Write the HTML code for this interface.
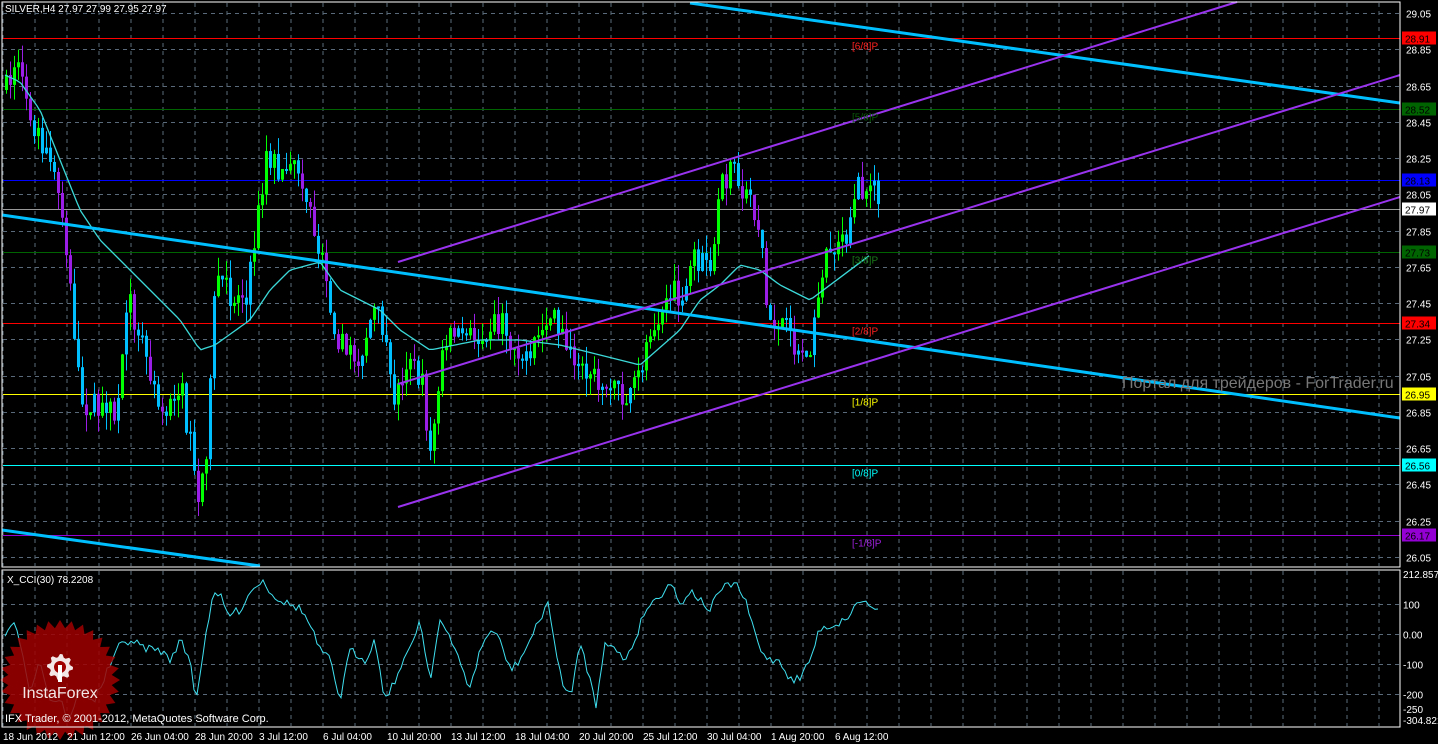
<!DOCTYPE html>
<html><head><meta charset="utf-8"><style>
html,body{margin:0;padding:0;background:#000;width:1438px;height:744px;overflow:hidden}
svg{display:block}
text{font-family:"Liberation Sans",sans-serif;font-size:10px}
</style></head><body>
<svg id="s" width="1438" height="744" xmlns="http://www.w3.org/2000/svg">
<rect width="1438" height="744" fill="#000"/>
<g id="grid"></g>
<g id="hl"></g>
<g id="candles"></g>
<polyline id="ma" fill="none" stroke="#3cd8d8" stroke-width="1.3"/>
<g stroke="#00bfff" stroke-width="3">
<line x1="690" y1="3" x2="1400" y2="103"/>
<line x1="2" y1="215" x2="1400" y2="418"/>
<line x1="2" y1="530" x2="260" y2="566"/>
</g>
<g stroke="#9933ee" stroke-width="2">
<line x1="398" y1="262" x2="1237" y2="2"/>
<line x1="398" y1="384" x2="1400" y2="75"/>
<line x1="398" y1="507" x2="1400" y2="197"/>
</g>
<text x="1122" y="388" fill="#777" style="font-size:16px">Портал для трейдеров - ForTrader.ru</text>
<g id="mlab" style="font-size:11px"></g>
<polyline id="cci" fill="none" stroke="#3fe0f0" stroke-width="1"/>
<g id="logo" transform="translate(60,680)">
<polygon id="star" fill="#a00000" fill-opacity="0.85"/>
<polygon id="gear" fill="#fff" fill-opacity="0.9"/>
<circle cx="0" cy="-13" r="6" fill="#a00000"/>
<rect x="-2" y="-15" width="4" height="17" fill="#fff"/>
<text x="0" y="18" text-anchor="middle" fill="#fff" fill-opacity="0.9" style="font-size:16px">InstaForex</text>
</g>
<rect x="2" y="2" width="1398" height="565" fill="none" stroke="#fff" stroke-width="1"/>
<rect x="2" y="570" width="1398" height="157" fill="none" stroke="#fff" stroke-width="1"/>
<text x="5" y="12" fill="#fff">SILVER,H4  27.97 27.99 27.95 27.97</text>
<text x="7" y="583" fill="#fff">X_CCI(30) 78.2208</text>
<text x="5" y="722" fill="#fff" style="font-size:11px">IFX Trader, © 2001-2012, MetaQuotes Software Corp.</text>
<g id="axis"></g>
</svg>
<script>
(function(){
var NS='http://www.w3.org/2000/svg';
function el(p,t,a,txt){var e=document.createElementNS(NS,t);for(var k in a)e.setAttribute(k,a[k]);if(txt!=null)e.textContent=txt;document.getElementById(p).appendChild(e);return e;}
function py(p){return 13+(29.05-p)*181.33;}
for(var x=3;x<1400;x+=32){el('grid','line',{x1:x,y1:3,x2:x,y2:566,stroke:'#5a6a7a','stroke-dasharray':'4,4'});el('grid','line',{x1:x,y1:571,x2:x,y2:726,stroke:'#5a6a7a','stroke-dasharray':'4,4'});}
for(var p=29.05;p>26;p-=0.2){var y=Math.round(py(p))+.5;el('grid','line',{x1:3,y1:y,x2:1400,y2:y,stroke:'#5a6a7a','stroke-dasharray':'4,4'});el('axis','text',{x:1406,y:y+4,fill:'#fff'},p.toFixed(2));}
[100,0,-100,-200].forEach(function(v){var y=634-0.3*v+.5;el('grid','line',{x1:3,y1:y,x2:1400,y2:y,stroke:'#5a6a7a','stroke-dasharray':'4,4'});el('axis','text',{x:1403,y:y+4,fill:'#fff'},v==0?'0.00':String(v));});
el('axis','text',{x:1403,y:578,fill:'#fff'},'212.857');
el('axis','text',{x:1403,y:713,fill:'#fff'},'-250');
el('axis','text',{x:1403,y:724,fill:'#fff'},'-304.821');
var H=[[28.91,'#ff0000','[6/8]P','#ff2020'],[28.52,'#006400','[5/8]P','#0a5a0a'],[28.13,'#0000ff',null],[27.97,'#999',null],[27.73,'#006400','[3/8]P','#1a7a1a'],[27.34,'#ff0000','[2/8]P','#ff2020'],[26.95,'#ffff00','[1/8]P','#ffff00'],[26.56,'#00ffff','[0/8]P','#00ffff'],[26.17,'#9400d3','[-1/8]P','#a020e0']];
var box={'28.91':'#ff0000','28.52':'#006400','28.13':'#0000ff','27.97':'#fff','27.73':'#006400','27.34':'#ff0000','26.95':'#ffff00','26.56':'#00ffff','26.17':'#9400d3'};
H.forEach(function(h){var y=Math.round(py(h[0]))+.5;el('hl','line',{x1:3,y1:y,x2:1400,y2:y,stroke:h[1],'stroke-width':1});if(h[2])el('mlab','text',{x:852,y:y+11,fill:h[3]},h[2]);el('axis','rect',{x:1402,y:y-7,width:34,height:13,fill:box[h[0].toFixed(2)]});el('axis','text',{x:1405,y:y+4,fill:'#000'},h[0].toFixed(2));});
var D=['18 Jun 2012','21 Jun 12:00','26 Jun 04:00','28 Jun 20:00','3 Jul 12:00','6 Jul 04:00','10 Jul 20:00','13 Jul 12:00','18 Jul 04:00','20 Jul 20:00','25 Jul 12:00','30 Jul 04:00','1 Aug 20:00','6 Aug 12:00'];
D.forEach(function(d,i){el('axis','text',{x:3+i*64,y:740,fill:'#fff'},d);});
var K=[[5,90],[15,60],[25,110],[45,150],[60,210],[70,300],[80,400],[100,410],[115,420],[125,300],[140,330],[150,370],[165,420],[178,380],[190,450],[196,510],[205,450],[215,270],[230,300],[245,290],[255,230],[265,150],[280,175],[300,170],[310,220],[320,260],[335,330],[345,360],[360,350],[372,310],[385,330],[392,400],[405,360],[420,380],[430,460],[440,350],[455,330],[470,340],[490,320],[505,330],[520,360],[535,340],[550,320],[565,340],[575,380],[590,370],[600,400],[615,380],[625,410],[640,370],[650,320],[665,300],[680,290],[695,260],[710,270],[720,190],[735,165],[745,200],[760,220],[765,320],[780,320],[790,340],[800,350],[810,350],[820,270],[830,245],[845,230],[858,185],[870,190],[880,205]];
function interp(A,x){for(var i=1;i<A.length;i++)if(x<=A[i][0]){var a=A[i-1],b=A[i];return a[1]+(b[1]-a[1])*(x-a[0])/(b[0]-a[0]);}return A[A.length-1][1];}
var seed=7;function r(){seed=(seed*16807)%2147483647;return seed/2147483647;}
var prev=interp(K,5);
for(var x=5;x<=880;x+=4){var c=interp(K,x)+(r()-.5)*30;var o=prev;var t0=Math.min(o,c),b0=Math.max(o,c);if(b0-t0<2)b0=t0+2;
var col=c<o?'#00ff00':(r()<.45?'#00bfff':'#9a1ee6');if(r()<.2)col='#00bfff';
el('candles','line',{x1:x+1.5,y1:t0-r()*18,x2:x+1.5,y2:b0+r()*18,stroke:col,'stroke-width':1});
el('candles','rect',{x:x,y:t0,width:3,height:b0-t0,fill:col});prev=c;}
var M=[[5,75],[20,82],[40,110],[60,160],[80,210],[100,240],[115,255],[150,290],[180,320],[200,350],[215,345],[250,320],[270,290],[290,270],[320,262],[340,290],[360,300],[380,310],[400,330],[430,350],[480,340],[520,340],[560,345],[600,355],[640,365],[680,330],[700,300],[720,285],[740,265],[760,270],[780,285],[810,300],[830,285],[850,270],[870,255]];
var pts=[];for(var x=5;x<=870;x+=4)pts.push(x+','+interp(M,x).toFixed(1));document.getElementById('ma').setAttribute('points',pts.join(' '));
var C=[[5,635],[15,625],[20,640],[30,690],[40,660],[50,700],[60,700],[70,720],[80,690],[95,700],[110,665],[120,645],[130,640],[145,648],[160,650],[170,660],[180,640],[190,660],[196,700],[205,640],[212,598],[220,595],[228,615],[240,610],[250,592],[262,580],[275,597],[290,605],[300,608],[310,625],[320,650],[330,660],[340,700],[350,650],[365,660],[375,640],[385,700],[395,680],[405,660],[420,620],[430,680],[440,620],[450,640],[460,660],[470,690],[480,650],[490,630],[500,640],[510,670],[520,660],[530,640],[540,620],[548,600],[555,650],[565,690],[572,694],[580,640],[590,680],[596,705],[605,640],[615,650],[625,660],[635,640],[645,610],[655,600],[665,590],[670,580],[680,605],[690,590],[700,600],[710,610],[720,590],[735,582],[745,600],[760,650],[770,660],[780,660],[790,680],[800,678],[810,660],[820,628],[835,625],[845,620],[860,600],[870,605],[880,612]];
var cp=[];for(var x=5;x<=880;x+=3)cp.push(x+','+(interp(C,x)+(r()-.5)*8).toFixed(1));document.getElementById('cci').setAttribute('points',cp.join(' '));
var sp=[];for(var i=0;i<64;i++){var a=i*Math.PI/32,R=i%2?52:60;sp.push((R*Math.cos(a)).toFixed(1)+','+(R*Math.sin(a)).toFixed(1));}document.getElementById('star').setAttribute('points',sp.join(' '));
var gp=[];for(var i=0;i<32;i++){var a=i*Math.PI/16,R=(Math.floor(i/2)%2)?10:13;gp.push((R*Math.cos(a)).toFixed(1)+','+(-13+R*Math.sin(a)).toFixed(1));}document.getElementById('gear').setAttribute('points',gp.join(' '));
})();
</script>
</body></html>
